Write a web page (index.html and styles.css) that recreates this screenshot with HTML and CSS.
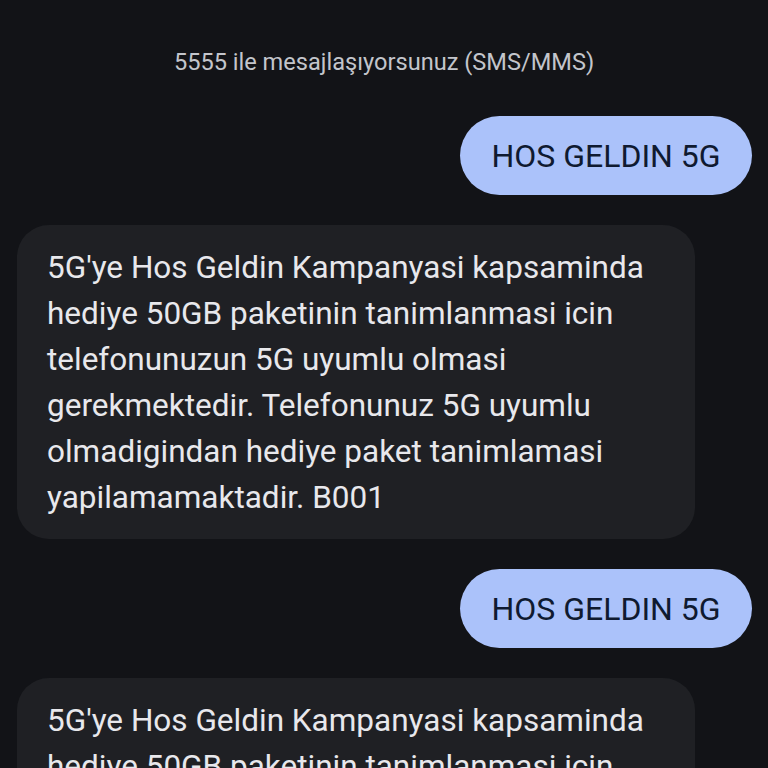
FILE: index.html
```html
<!DOCTYPE html>
<html lang="tr">
<head>
<meta charset="utf-8">
<link rel="stylesheet" href="styles.css">
</head>
<body>
<div class="screen">
  <div class="info">5555 ile mesajlaşıyorsunuz (SMS/MMS)</div>
  <div class="thread">
    <div class="bubble sent">HOS GELDIN 5G</div>
    <div class="bubble received">5G'ye Hos Geldin Kampanyasi kapsaminda<br>hediye 50GB paketinin tanimlanmasi icin<br>telefonunuzun 5G uyumlu olmasi<br>gerekmektedir. Telefonunuz 5G uyumlu<br>olmadigindan hediye paket tanimlamasi<br>yapilamamaktadir. B001</div>
    <div class="bubble sent">HOS GELDIN 5G</div>
    <div class="bubble received">5G'ye Hos Geldin Kampanyasi kapsaminda<br>hediye 50GB paketinin tanimlanmasi icin<br>telefonunuzun 5G uyumlu olmasi<br>gerekmektedir. Telefonunuz 5G uyumlu<br>olmadigindan hediye paket tanimlamasi<br>yapilamamaktadir. B001</div>
  </div>
</div>
</body>
</html>
```
FILE: styles.css
```css
* { box-sizing: border-box; }
html, body {
  margin: 0;
  padding: 0;
  background: #121317;
}
.screen {
  font-family: Roboto, "Noto Sans", sans-serif;
  display: flex;
  flex-direction: column;
  height: 768px;
  overflow: hidden;
}
.info {
  text-align: center;
  color: #c3c5cb;
  font-size: 23.6px;
  line-height: 26px;
  padding-top: 49px;
  padding-bottom: 41px;
}
.thread {
  display: flex;
  flex-direction: column;
  gap: 30px;
  padding: 0 16px 0 17px;
}
.bubble {
  white-space: nowrap;
  flex-shrink: 0;
}
.sent {
  align-self: flex-end;
  background: #abc2fa;
  color: #0f1a30;
  border-radius: 40px;
  height: 79px;
  width: 292px;
  display: flex;
  align-items: center;
  justify-content: center;
  font-size: 32px;
}
.received {
  align-self: flex-start;
  width: 678px;
  background: #1f2024;
  color: #e8e8ec;
  border-radius: 32px;
  padding: 20px 30px 18px 30px;
  font-size: 31.5px;
  line-height: 46px;
}
```
